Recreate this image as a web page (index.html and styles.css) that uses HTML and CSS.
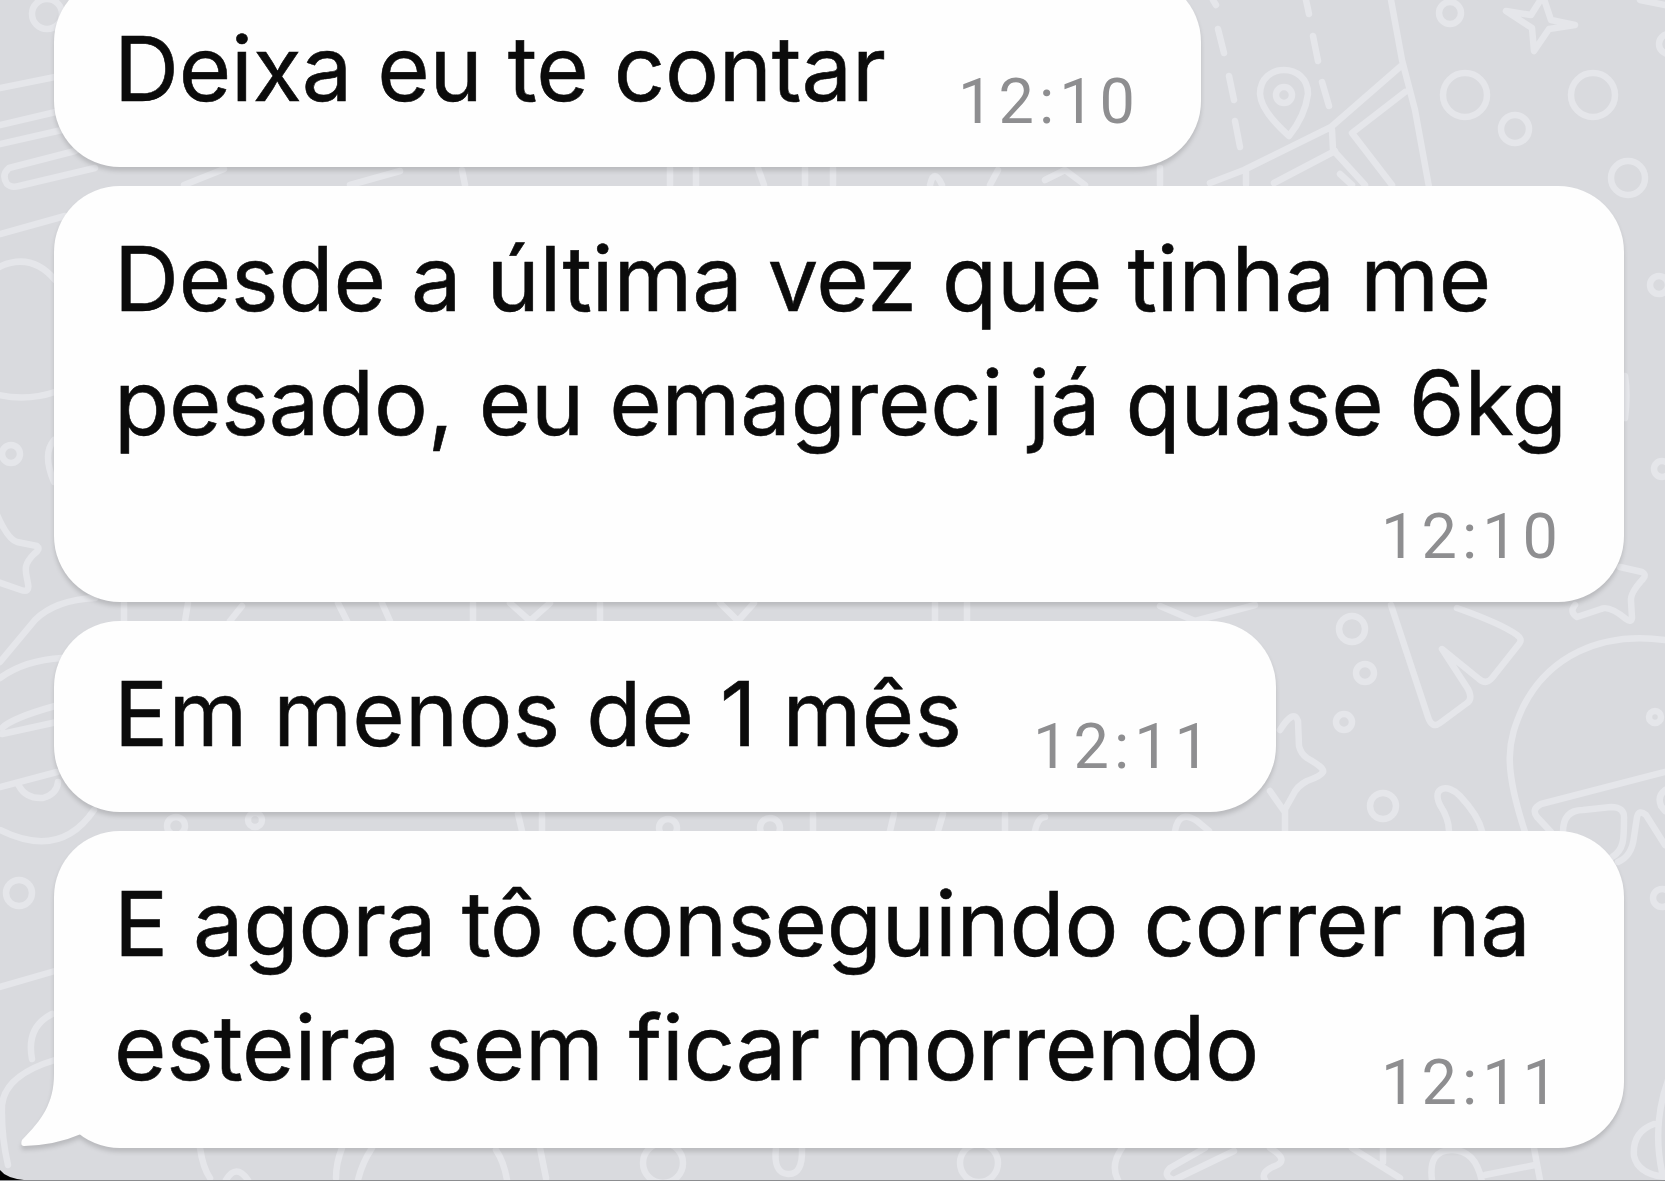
FILE: index.html
```html
<!DOCTYPE html>
<html lang="pt-BR">
<head>
  <meta charset="UTF-8" />
  <meta name="viewport" content="width=device-width, initial-scale=1" />
  <title>Conversa</title>
  <link rel="stylesheet" href="styles.css">
</head>
<body>

  <!-- Papel de parede -->
  <svg class="wallpaper" viewBox="0 0 1665 1181" aria-hidden="true">
    <!-- mapa -->
    <path d="M1213 0l3 5M1218 29l6 24M1229 76l5 24M1235 121l5 26M1306 0l3 14M1313 36l5 25M1322 82l7 24" />
    <path d="M1391 0l11 60 13 50 14 77M1210 183l34-13 87-43 70-61M1274 183l61-32M1332 130l1 20 32 35M1405 92l-53 41 40 52M1246 172v12" />
    <path d="M1289 136q-28-25-29-42c0-32 48-32 48 0q-3 22-19 42z" />
    <circle cx="1284" cy="95" r="8" />
    <path d="M1340 174l12 11" />
    <!-- estrelas e bolinhas -->
    <path d="M1506 11l25 4 12-19 8 24 24 5-26 4-15 22-2-23z" />
    <circle cx="1450" cy="13" r="11" />
    <circle cx="1465" cy="95" r="22" />
    <circle cx="1593" cy="95" r="22" />
    <circle cx="1515" cy="129" r="14" />
    <circle cx="1628" cy="178" r="17" />
    <circle cx="1669" cy="44" r="10" />
    <circle cx="1659" cy="285" r="9" />
    <circle cx="1662" cy="469" r="8" />
    <circle cx="1662" cy="898" r="9" />
    <path d="M1640 0l25 5M1625 376q3 18 0 42" />
    <!-- lado direito -->
    <circle cx="1352" cy="629" r="13" />
    <circle cx="1365" cy="673" r="9" />
    <circle cx="1344" cy="722" r="8" />
    <circle cx="1383" cy="806" r="13" />
    <path d="M1391 605l37 112q4 12 12 6l27-20q6-4 1-14l-26-40 37 30q7 6 13-1l27-34q4-5-2-9-15-11-60-27" />
    <path d="M1620 567l22 5q5 3 1 7-13 14-12 22l1 17q-1 5-6 1-17-14-25-10l-24 8q-8-5-2-12" />
    <path d="M1525 832c-22-67-18-90-2-125 25-50 77-76 142-67M1665 772l-124 32q-10 5-4 13l14 15M1563 832q0-22 20-22l28-3q14 0 13 12c0 20 0 31-12 38M1618 862q14-6 16-25l3-20q2-8 9-2l19 30M1665 790q-8 6-4 16l4 5" />
    <circle cx="1655" cy="717" r="6" />
    <path d="M1280 730q14-22 18-9l1 25q2 8 8 12 18 10 16 14t-16 9q-10 5-14 14l-9 16-14-20M1285 808v24" />
    <path d="M1449 831q0-12-9-26c-9-18 8-22 20-9q18 19 22 35" />
    <!-- lado esquerdo -->
    <circle cx="47" cy="14" r="15" />
    <path d="M0 88l60-12M0 125l60-14M0 144l62-14M75 151l-66 17q-8 7-2 16 4 4 12 2l76-18M0 234l65-18" />
    <path d="M-10 272q38-24 65 8M-5 394q30 8 60-2" />
    <circle cx="11" cy="454" r="9" />
    <path d="M54 440q-12 14 0 42" />
    <path d="M-5 510q12 29 22 32l20 4q4 3-3 8c-12 12-8 17-6 30q2 9-7 6l-26-9" />
    <path d="M0 662l35-42q20-20 60-22M0 678q25-18 62-20M55 706q-43 12-53 22M2 734l55-12M0 787l57-15M19 786q7 13 24 12 14-4 15-16M0 830q60 30 94-20" />
    <circle cx="19" cy="893" r="13" />
    <path d="M0 987l55-16M52 1014q-26 13-20 45M55 1060q-50 15-53 45-1 30 6 60" />
    <!-- entre os balões -->
    <path d="M184 185l40-16M350 185l50-14M462 170l3 15M670 168v17M696 168v17M758 168l6 17M805 168v17M833 168v17M930 185q4-18 12 0M990 185l8-15M1045 180l20-10 20 15M1160 168v17" />
    <path d="M124 603v18M188 603l-3 18M230 621l12-15M338 603l9 18M382 603l8 18M473 603v18M510 603l20 18 20-18M600 603v18M720 603l18 18 16-18M935 603v18M967 603v18M1160 606l35 15 60-16" />
    <circle cx="176" cy="826" r="9" />
    <circle cx="255" cy="820" r="7" />
    <circle cx="668" cy="828" r="9" />
    <circle cx="770" cy="828" r="10" />
    <path d="M518 814l4 17M542 814v17M813 814v17M890 831l4-17M938 831l5-17M1005 814v17M1035 831q3-14 10-14M1175 831q4-22 22-10l12 10" />
    <!-- rodapé -->
    <path d="M200 1148q3 20 10 30M226 1180q10-17 22 0M342 1148q-6 15-6 30M372 1148q-10 15-14 32M496 1150q8 12 11 30M540 1148l6 30" />
    <circle cx="663" cy="1163" r="20" />
    <path d="M776 1148q-3 25 12 26t14-26" />
    <circle cx="979" cy="1163" r="19" />
    <path d="M1122 1148q-12 17-4 32M1205 1148l-35 20q-8 8 4 12l60-29M1270 1148q20 12 5 18t-10 14M1352 1148l48 30M1383 1148v14M1432 1180q-4-30 20-30t30 32M1485 1175l50-10M1534 1148l6 32" />
    <path d="M1654 1124q-22 8-20 32 4 18 31 21M1668 1080q-16 45-6 92" />
  </svg>

  <main class="chat">
    <div class="bubble">
      <p class="text">Deixa eu te contar</p>
      <span class="time">12:10</span>
    </div>

    <div class="bubble bubble-stacked">
      <p class="text">Desde a última vez que tinha me<br>pesado, eu emagreci já quase 6kg</p>
      <span class="time">12:10</span>
    </div>

    <div class="bubble bubble-medium">
      <p class="text">Em menos de 1 mês</p>
      <span class="time">12:11</span>
    </div>

    <div class="bubble bubble-last">
      <p class="text">E agora tô conseguindo correr na<br>esteira sem ficar morrendo</p>
      <span class="time">12:11</span>
      <svg class="tail" viewBox="0 0 62 90" aria-hidden="true">
        <path d="M34 0v16C34 45 22 62 2 82q-2 6 2 6 32-1 57-12V0z" />
      </svg>
    </div>
  </main>

  <svg class="corner" viewBox="0 0 24 10" aria-hidden="true"><path d="M0 0q6 8 24 10H0z" /></svg>

</body>
</html>
```

FILE: styles.css
```css
* {
  box-sizing: border-box;
}
body {
  margin: 0;
  height: 1181px;
  overflow: hidden;
  position: relative;
  background-color: #d9dade;
  font-family: Inter, "Liberation Sans", sans-serif;
  border-bottom: 1px solid #8c8d90;
}
.wallpaper {
  position: absolute;
  top: 0;
  left: 0;
  width: 1665px;
  height: 1181px;
  fill: none;
  stroke: #e5e6ea;
  stroke-width: 6.5;
  stroke-linecap: round;
  stroke-linejoin: round;
}
.chat {
  position: relative;
  display: flex;
  flex-direction: column;
  align-items: flex-start;
  gap: 19px;
  margin-top: -24px;
  padding-left: 54px;
}
/* texto e hora dividem a mesma célula */
.bubble {
  position: relative;
  display: grid;
  grid-template-columns: 100%;
  width: 1147px;
  height: 191px;
  padding: 31px 65px 26px 60px;
  background-color: #fefefe;
  border-radius: 66px;
  filter: drop-shadow(0 4px 2px rgba(0,0,0,0.14));
}
.bubble-stacked {
  width: 1570px;
  height: 416px;
}
.bubble-medium {
  width: 1222px;
}
.bubble-last {
  width: 1570px;
  height: 317px;
}
.text {
  grid-area: 1 / 1;
  margin: 0;
  font-size: 90px;
  line-height: 124px;
  letter-spacing: -0.15px;
  color: #0b0b0b;
  -webkit-text-stroke: 0.6px #0b0b0b;
  white-space: nowrap;
}
.bubble-medium .text {
  letter-spacing: 0.3px;
}
.time {
  grid-area: 1 / 1;
  align-self: end;
  justify-self: end;
  margin-right: -4px;
  font-family: Roboto, "Liberation Sans", sans-serif;
  font-size: 63px;
  line-height: 78px;
  letter-spacing: 5px;
  color: #8e8e90;
}
.tail {
  position: absolute;
  left: -34px;
  bottom: 0;
  width: 62px;
  height: 90px;
  fill: #fefefe;
}
.corner {
  position: absolute;
  left: 0;
  bottom: 0;
  width: 24px;
  height: 10px;
}
```
